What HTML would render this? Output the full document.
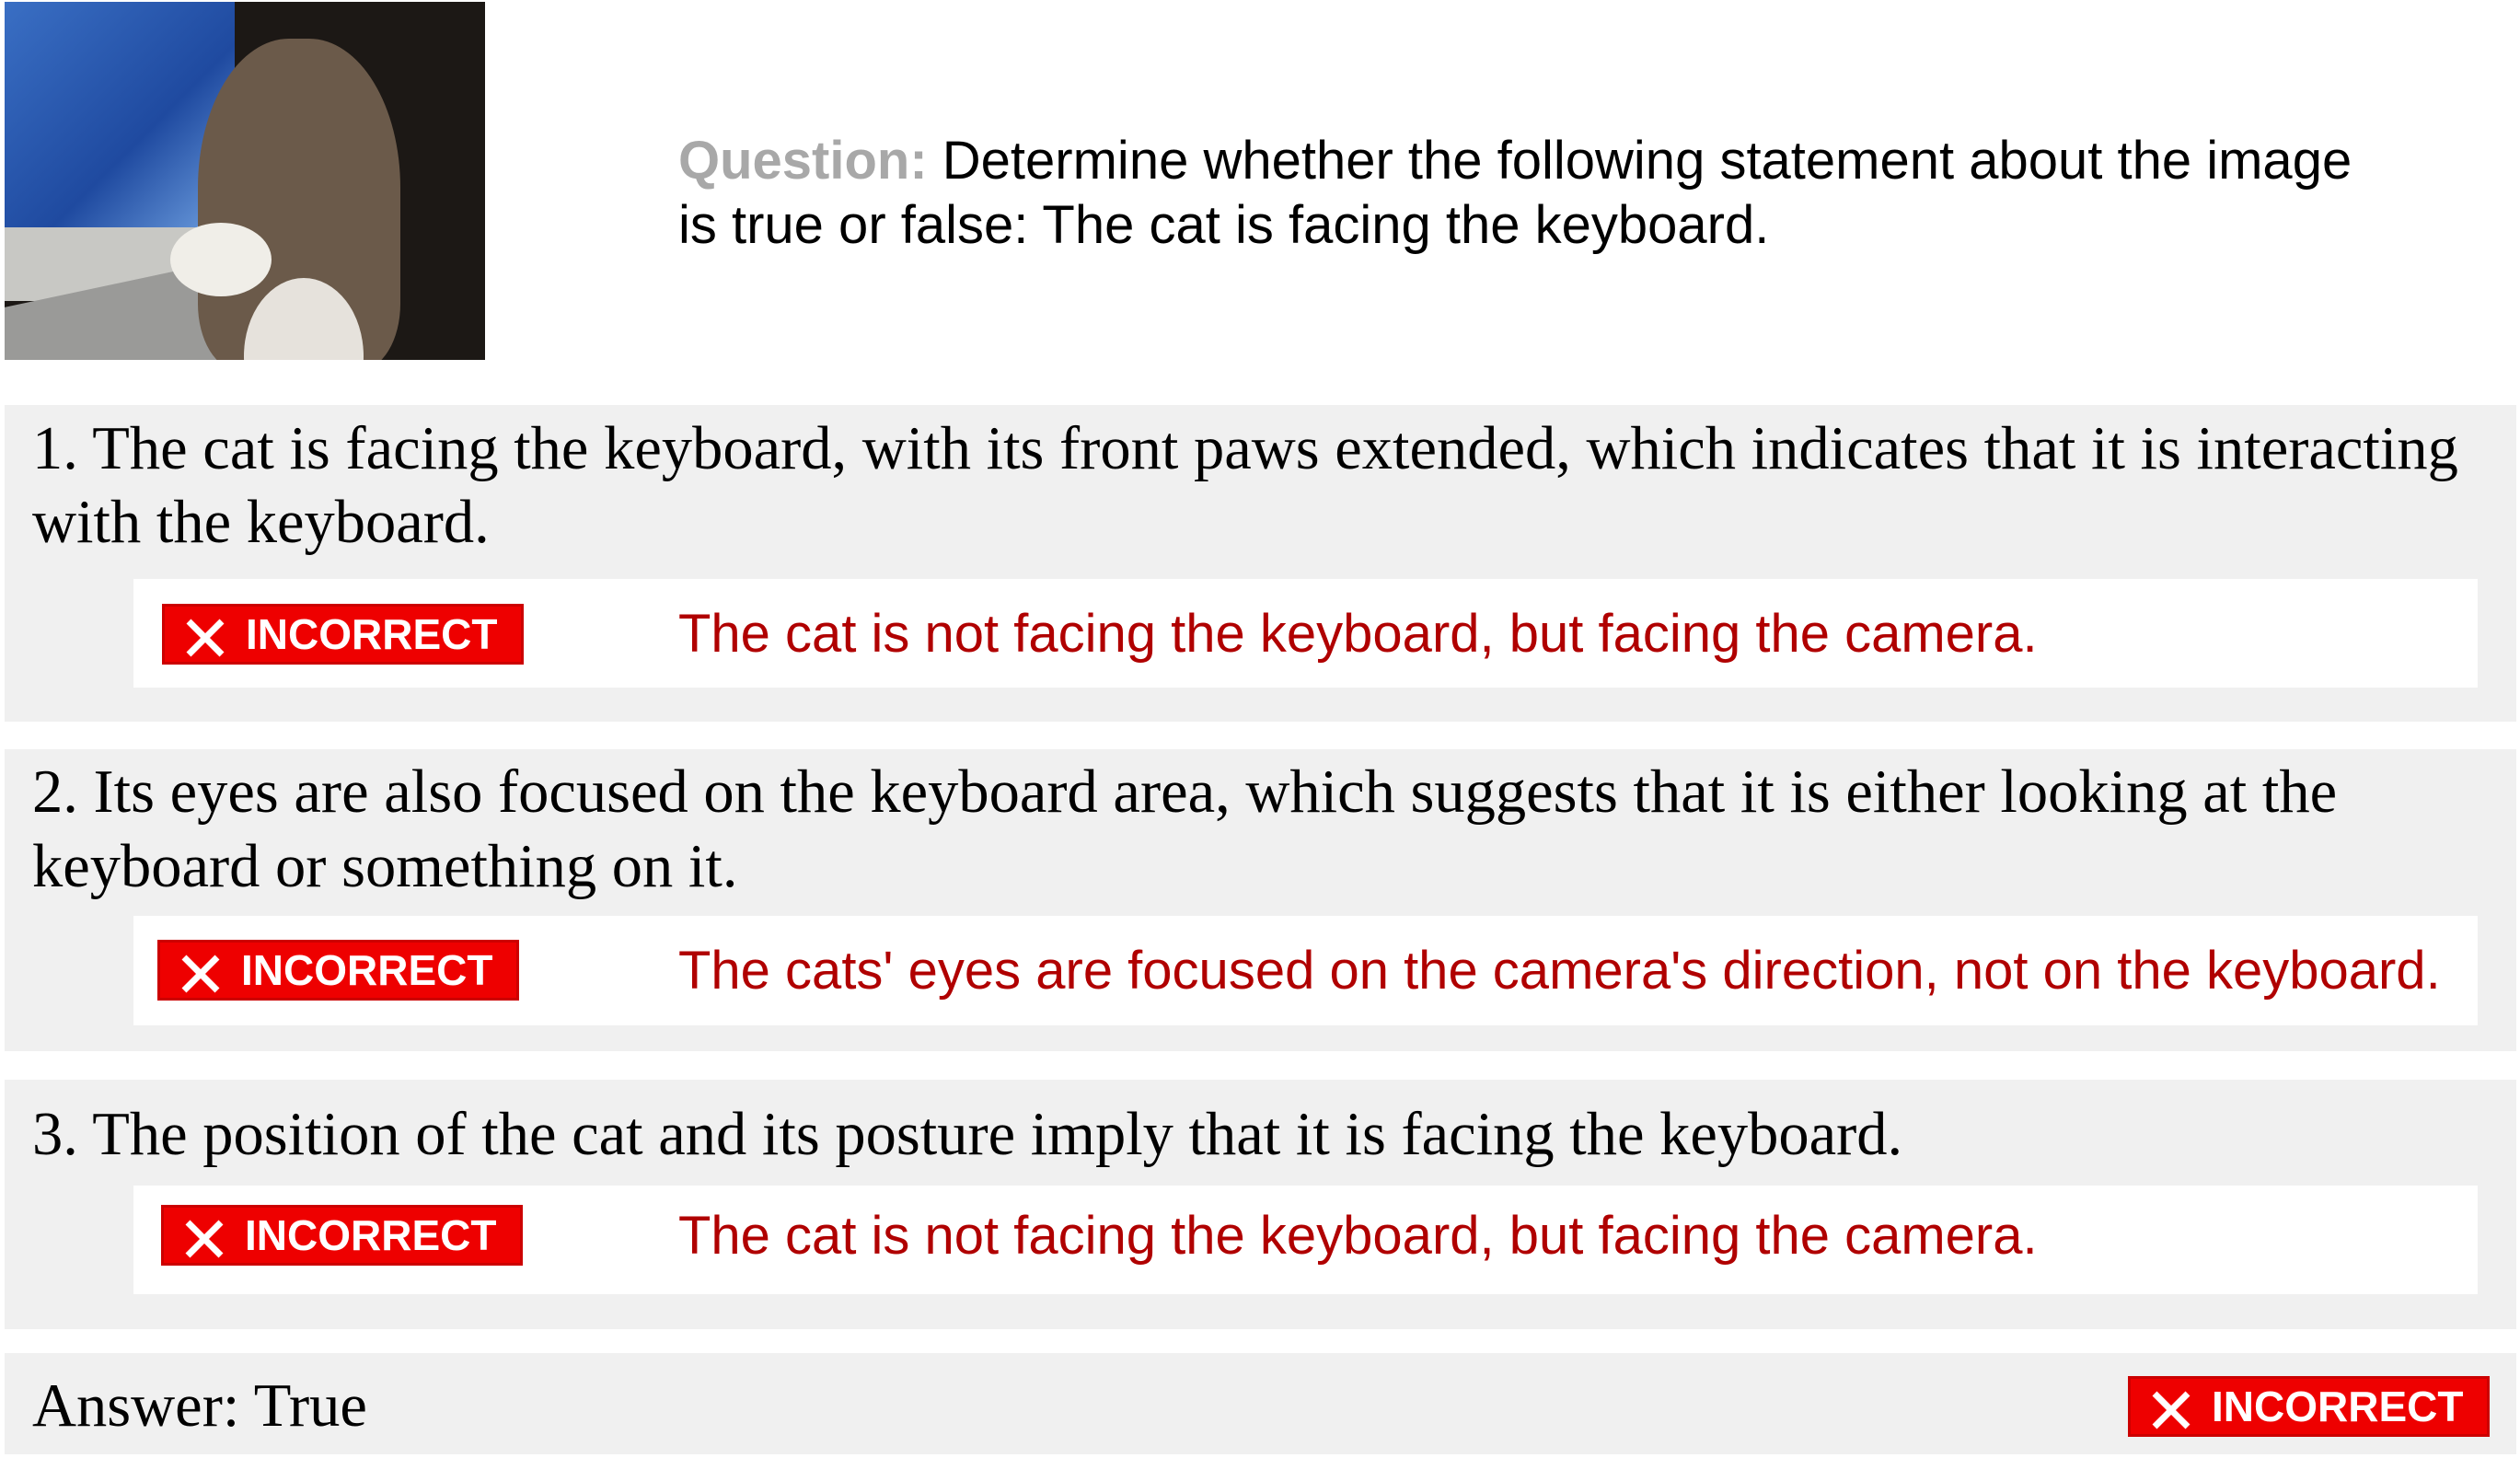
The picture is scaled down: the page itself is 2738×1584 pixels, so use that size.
<!DOCTYPE html>
<html><head><meta charset="utf-8"><style>
*{margin:0;padding:0;box-sizing:border-box}
body{width:2738px;height:1584px;background:#fff;position:relative;overflow:hidden}
.a{position:absolute;white-space:nowrap}
.box{position:absolute;background:#f0f0f0;left:5px;width:2729px}
.in{position:absolute;background:#fff}
.ser{font-family:"Liberation Serif",serif;font-size:66.5px;color:#000}
.san{font-family:"Liberation Sans",sans-serif}
.badge{position:absolute;background:#ee0000;border:3px solid #c00;width:393px;height:66px;color:#fff;font-family:"Liberation Sans",sans-serif;font-weight:bold;font-size:46px;line-height:60px}
.badge svg{position:absolute;left:22px;top:12px}
.badge span{position:absolute;left:88px;top:0}
.red{color:#b00000;font-size:58px}
</style></head><body>
<div class="a" style="left:5px;top:2px;width:522px;height:389px;background:#1c1815;overflow:hidden">
 <div style="position:absolute;left:0;top:0;width:250px;height:245px;background:linear-gradient(135deg,#3a6fc4,#1f4aa0 60%,#6fa0e0)"></div>
 <div style="position:absolute;left:0;top:245px;width:225px;height:80px;background:#c8c8c4"></div>
 <div style="position:absolute;left:0;width:300px;height:120px;background:#9a9a98;transform:skewY(-12deg);top:300px"></div>
 <div style="position:absolute;left:210px;top:40px;width:220px;height:360px;background:#6b5a4a;border-radius:45% 45% 20% 20%"></div>
 <div style="position:absolute;left:260px;top:300px;width:130px;height:170px;background:#e6e2dc;border-radius:50%"></div>
 <div style="position:absolute;left:180px;top:240px;width:110px;height:80px;background:#f0eee8;border-radius:50%"></div>
</div>
<div class="a san" style="left:737px;top:140px;font-size:58px;line-height:70px"><span style="color:#a8a8a8;font-weight:bold">Question:</span> Determine whether the following statement about the image<br>is true or false: The cat is facing the keyboard.</div>

<div class="box" style="top:440px;height:344px"></div>
<div class="a ser" style="left:35px;top:450px">1. The cat is facing the keyboard, with its front paws extended, which indicates that it is interacting</div>
<div class="a ser" style="left:35px;top:530px">with the keyboard.</div>
<div class="in" style="left:145px;top:629px;width:2547px;height:118px"></div>
<div class="badge" style="left:176px;top:656px"><svg width="44" height="44" viewBox="0 0 44 44"><path d="M4 4L40 40M40 4L4 40" stroke="#fff" stroke-width="7"/></svg><span>INCORRECT</span></div>
<div class="a san red" style="left:737px;top:655px">The cat is not facing the keyboard, but facing the camera.</div>

<div class="box" style="top:814px;height:328px"></div>
<div class="a ser" style="left:35px;top:823px">2. Its eyes are also focused on the keyboard area, which suggests that it is either looking at the</div>
<div class="a ser" style="left:35px;top:904px">keyboard or something on it.</div>
<div class="in" style="left:145px;top:995px;width:2547px;height:119px"></div>
<div class="badge" style="left:171px;top:1021px"><svg width="44" height="44" viewBox="0 0 44 44"><path d="M4 4L40 40M40 4L4 40" stroke="#fff" stroke-width="7"/></svg><span>INCORRECT</span></div>
<div class="a san red" style="left:737px;top:1021px">The cats' eyes are focused on the camera's direction, not on the keyboard.</div>

<div class="box" style="top:1173px;height:271px"></div>
<div class="a ser" style="left:35px;top:1195px">3. The position of the cat and its posture imply that it is facing the keyboard.</div>
<div class="in" style="left:145px;top:1288px;width:2547px;height:118px"></div>
<div class="badge" style="left:175px;top:1309px"><svg width="44" height="44" viewBox="0 0 44 44"><path d="M4 4L40 40M40 4L4 40" stroke="#fff" stroke-width="7"/></svg><span>INCORRECT</span></div>
<div class="a san red" style="left:737px;top:1309px">The cat is not facing the keyboard, but facing the camera.</div>

<div class="box" style="top:1470px;height:110px"></div>
<div class="a ser" style="left:35px;top:1490px">Answer: True</div>
<div class="badge" style="left:2312px;top:1495px"><svg width="44" height="44" viewBox="0 0 44 44"><path d="M4 4L40 40M40 4L4 40" stroke="#fff" stroke-width="7"/></svg><span>INCORRECT</span></div>
</body></html>
